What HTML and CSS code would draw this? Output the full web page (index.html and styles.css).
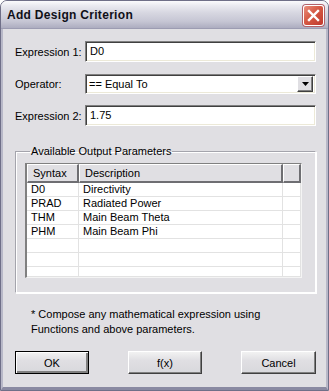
FILE: index.html
```html
<!DOCTYPE html>
<html>
<head>
<meta charset="utf-8">
<link rel="stylesheet" href="styles.css">
</head>
<body>
<div class="window">
  <div class="titlebar">
    <span class="title">Add Design Criterion</span>
    <span class="close"><svg width="13" height="13" viewBox="0 0 13 13"><path d="M2 2 L11 11 M11 2 L2 11" stroke="#fff" stroke-width="2.4" stroke-linecap="square"/></svg></span>
  </div>
  <div class="content">
    <div class="row">
      <span class="label">Expression 1:</span>
      <div class="field">D0</div>
    </div>
    <div class="row">
      <span class="label">Operator:</span>
      <div class="field select">
        <span class="seltext">== Equal To</span>
        <span class="dropbtn"><svg width="7" height="4" viewBox="0 0 7 4"><path d="M0 0 H7 L3.5 4 Z" fill="#000"/></svg></span>
      </div>
    </div>
    <div class="row">
      <span class="label">Expression 2:</span>
      <div class="field">1.75</div>
    </div>
    <fieldset class="group">
      <legend>Available Output Parameters</legend>
      <div class="table">
        <div class="thead">
          <div class="th c1">Syntax</div>
          <div class="th c2">Description</div>
          <div class="th c3"></div>
        </div>
        <div class="tr"><div class="td c1">D0</div><div class="td c2">Directivity</div><div class="td c3"></div></div>
        <div class="tr"><div class="td c1">PRAD</div><div class="td c2">Radiated Power</div><div class="td c3"></div></div>
        <div class="tr"><div class="td c1">THM</div><div class="td c2">Main Beam Theta</div><div class="td c3"></div></div>
        <div class="tr"><div class="td c1">PHM</div><div class="td c2">Main Beam Phi</div><div class="td c3"></div></div>
        <div class="tr"><div class="td c1"></div><div class="td c2"></div><div class="td c3"></div></div>
        <div class="tr"><div class="td c1"></div><div class="td c2"></div><div class="td c3"></div></div>
        <div class="tr last"><div class="td c1"></div><div class="td c2"></div><div class="td c3"></div></div>
      </div>
    </fieldset>
    <p class="note">* Compose any mathematical expression using<br>Functions and above parameters.</p>
    <div class="buttons">
      <button class="btn default">OK</button>
      <button class="btn">f(x)</button>
      <button class="btn wide">Cancel</button>
    </div>
  </div>
</div>
</body>
</html>
```
FILE: styles.css
```css
* { box-sizing: border-box; }
html, body { margin: 0; padding: 0; background: #fff; }
body { font-family: "Liberation Sans", Arial, sans-serif; font-size: 11px; color: #000; }

.window {
  width: 329px;
  height: 391px;
  display: flex;
  flex-direction: column;
  background: #e0dfe3;
  border-radius: 7px 7px 0 0;
  border: 1px solid #6f6f88;
  overflow: hidden;
}

.titlebar {
  height: 28px;
  flex: none;
  display: flex;
  align-items: center;
  justify-content: space-between;
  padding: 0 4px 0 6px;
  background: linear-gradient(#fbfbfd 0%, #e9e9f0 18%, #d6d6e0 45%, #c6c6d4 75%, #adadc0 100%);
  border-bottom: 1px solid #9c9cb2;
}
.title {
  font-family: "Liberation Sans", Arial, sans-serif;
  font-weight: bold;
  font-size: 12px;
  color: #101018;
  letter-spacing: 0.3px;
  padding-top: 1px;
}
.close {
  width: 21px;
  height: 21px;
  border-radius: 3px;
  border: 1px solid #fff;
  box-shadow: 0 0 0 1px #b3616a;
  background: linear-gradient(135deg, #ea8f7d 0%, #d55944 45%, #c0392e 100%);
  display: flex;
  align-items: center;
  justify-content: center;
  margin-top: 2px;
}

.content {
  flex: 1;
  display: flex;
  flex-direction: column;
  padding: 12px 10px 0 12px;
  border-left: 2px solid #b8b8c8;
  border-right: 2px solid #b8b8c8;
  border-bottom: 3px solid #8a8aa2;
}

.row {
  display: flex;
  align-items: center;
  height: 21px;
  margin-bottom: 11px;
}
.label { width: 70px; flex: none; }
.field {
  flex: 1;
  height: 21px;
  background: #fff;
  border-top: 1px solid #808080;
  border-left: 1px solid #808080;
  border-right: 1px solid #fff;
  border-bottom: 1px solid #fff;
  box-shadow: inset 1px 1px 0 #404040, inset -1px -1px 0 #ece9d8;
  padding: 2px 4px;
  line-height: 14px;
}
.select {
  display: flex;
  align-items: center;
  justify-content: space-between;
  padding: 0 2px 0 3px;
  height: 20px;
}
.dropbtn {
  width: 16px;
  height: 16px;
  background: #e0dfe3;
  border-top: 1px solid #fff;
  border-left: 1px solid #fff;
  border-right: 1px solid #404040;
  border-bottom: 1px solid #404040;
  box-shadow: inset -1px -1px 0 #808080;
  display: flex;
  align-items: center;
  justify-content: center;
}

.group {
  margin: 8px 0 0 0;
  padding: 6px 13px 14px 9px;
  border-color: #a4a4ac #fff #fff #a4a4ac;
  border-style: solid;
  border-width: 1px;
  box-shadow: inset 1px 1px 0 #fff, 1px 1px 0 #fff;
  min-width: 0;
}
.group legend {
  padding: 0 1px;
  margin-left: 5px;
}

.table {
  height: 115px;
  background: #fff;
  border-top: 1px solid #808080;
  border-left: 2px solid #808080;
  border-right: 1px solid #f4f4f4;
  border-bottom: 1px solid #f4f4f4;
  display: flex;
  flex-direction: column;
  overflow: hidden;
}
.thead { display: flex; height: 19px; flex: none; }
.th {
  background: #e0dfe3;
  border-top: 1px solid #fff;
  border-left: 1px solid #fff;
  border-right: 2px solid #6e6e72;
  border-bottom: 2px solid #6e6e72;
  padding: 2px 0 0 5px;
  line-height: 13px;
}
.c1 { width: 52px; flex: none; }
.c2 { width: 204px; flex: none; }
.c3 { flex: 1; }
.tr { display: flex; height: 14px; flex: none; }
.tr.last { flex: 1; }
.td {
  border-right: 1px solid #e2e2e2;
  border-bottom: 1px solid #e2e2e2;
  padding: 0 0 0 4px;
  line-height: 13px;
}

.note {
  margin: 14px 0 0 16px;
  line-height: 15px;
}

.buttons {
  display: flex;
  justify-content: space-between;
  margin-top: 14px;
}
.btn {
  font-family: "Liberation Sans", Arial, sans-serif;
  font-size: 11px;
  width: 74px;
  height: 23px;
  background: linear-gradient(#f2f2f2, #e0dfe3 40%, #d8d8dc);
  border-top: 1px solid #fff;
  border-left: 1px solid #fff;
  border-right: 1px solid #404040;
  border-bottom: 1px solid #404040;
  box-shadow: inset -1px -1px 0 #808080;
  padding: 0;
  color: #000;
}
.btn.wide { width: 75px; }
.btn.default {
  border: 1px solid #000;
  box-shadow: inset 1px 1px 0 #fff, inset -2px -2px 0 #808080;
}
```
